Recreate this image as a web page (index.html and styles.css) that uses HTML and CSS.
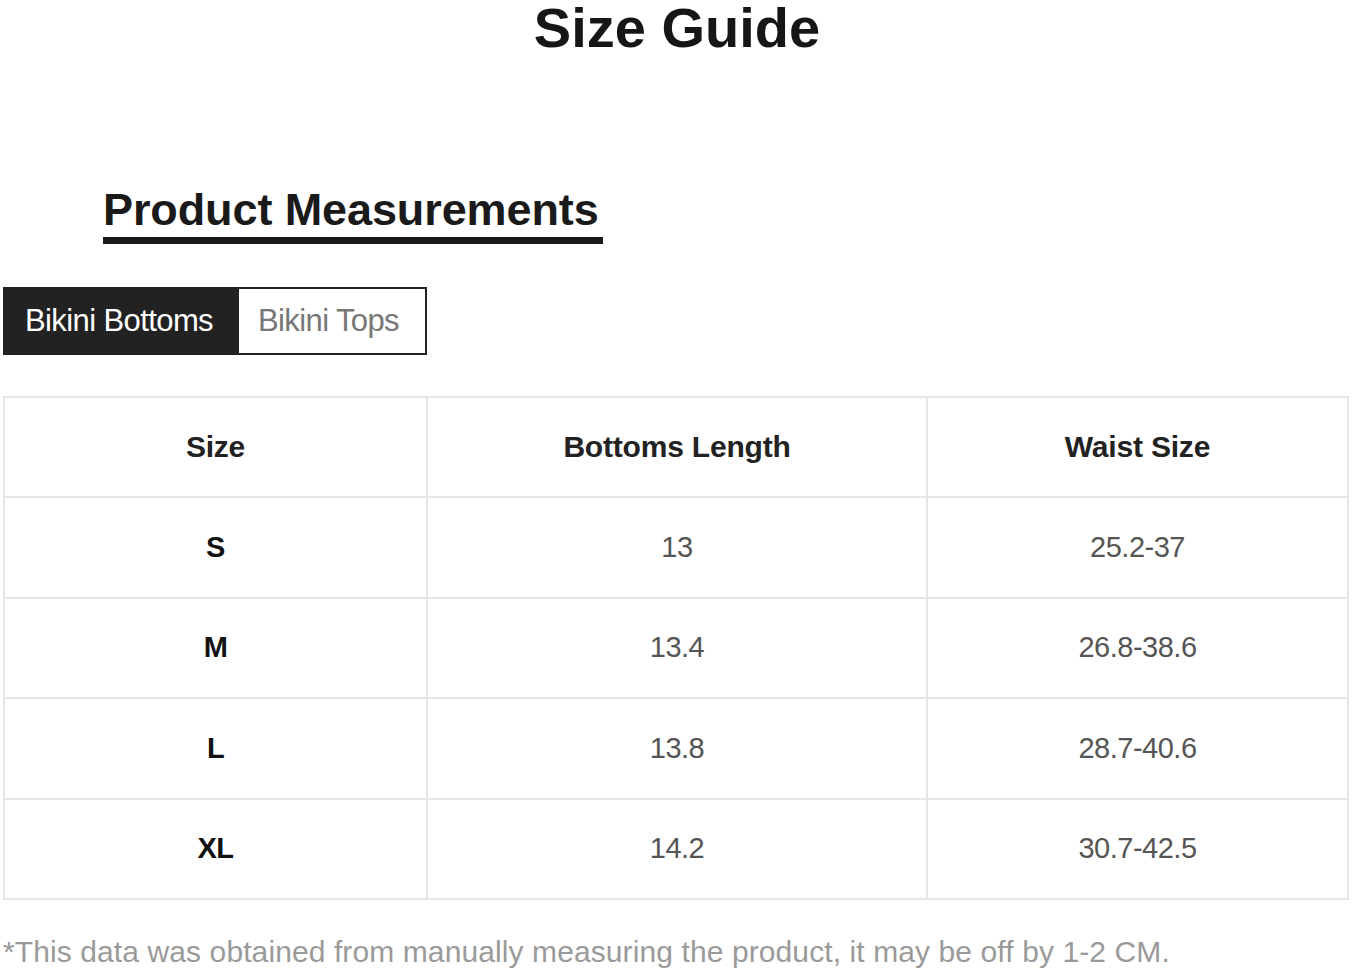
FILE: index.html
```html
<!DOCTYPE html>
<html lang="en">
<head>
<meta charset="utf-8">
<title>Size Guide</title>
<link rel="stylesheet" href="styles.css">
</head>
<body>
  <h1 class="page-title">Size Guide</h1>
  <main class="guide">
    <h2 class="section-title">Product Measurements</h2>
    <div class="tabs">
      <button class="tab tab-active">Bikini Bottoms</button>
      <button class="tab">Bikini Tops</button>
    </div>
    <table class="size-table">
      <colgroup>
        <col class="col-size">
        <col class="col-length">
        <col class="col-waist">
      </colgroup>
      <thead>
        <tr>
          <th>Size</th>
          <th>Bottoms Length</th>
          <th>Waist Size</th>
        </tr>
      </thead>
      <tbody>
        <tr><td class="size">S</td><td>13</td><td>25.2-37</td></tr>
        <tr><td class="size">M</td><td>13.4</td><td>26.8-38.6</td></tr>
        <tr><td class="size">L</td><td>13.8</td><td>28.7-40.6</td></tr>
        <tr><td class="size">XL</td><td>14.2</td><td>30.7-42.5</td></tr>
      </tbody>
    </table>
    <p class="note">*This data was obtained from manually measuring the product, it may be off by 1-2 CM.</p>
  </main>
</body>
</html>
```

FILE: styles.css
```css
html, body {
  margin: 0;
  padding: 0;
  background: #ffffff;
}

body {
  font-family: "Liberation Sans", Arial, sans-serif;
  color: #1a1a1a;
}

.page-title {
  margin: 0;
  font-size: 56px;
  line-height: 56px;
  font-weight: 700;
  text-align: center;
  color: #161616;
}

.guide {
  margin-left: 3px;
  width: 1344px;
  display: flex;
  flex-direction: column;
  align-items: flex-start;
}

.section-title {
  margin: 131px 0 0 100px;
  font-size: 45px;
  line-height: 46px;
  font-weight: 700;
  color: #1a1a1a;
  padding: 0 4px 4px 0;
  border-bottom: 7px solid #1a1a1a;
  letter-spacing: -0.1px;
}

.tabs {
  margin-top: 43px;
  display: flex;
}

.tab {
  height: 68px;
  padding: 0 26px 0 19px;
  border: 2px solid #222222;
  background: #ffffff;
  color: #777777;
  font-family: "Liberation Sans", Arial, sans-serif;
  font-size: 31px;
  letter-spacing: -0.6px;
  display: flex;
  align-items: center;
  cursor: pointer;
}

.tab-active {
  background: #222222;
  color: #ffffff;
  padding: 0 24px 0 20px;
}

.tab + .tab {
  border-left: none;
}

.size-table {
  margin-top: 41px;
  width: 1344px;
  border-collapse: collapse;
  table-layout: fixed;
  border: 2px solid #e6e6e6;
}

.col-size { width: 423px; }
.col-length { width: 500px; }
.col-waist { width: 421px; }

.size-table th,
.size-table td {
  height: 98.4px;
  padding: 0;
  border: 2px solid #e6e6e6;
  text-align: center;
  vertical-align: middle;
}

.size-table th {
  font-size: 30px;
  font-weight: 700;
  color: #222222;
  letter-spacing: -0.2px;
}

.size-table td {
  font-size: 29px;
  color: #555555;
  letter-spacing: -0.5px;
}

.size-table td.size {
  font-weight: 700;
  color: #111111;
}

.note {
  margin: 35px 0 0 0;
  font-size: 30px;
  line-height: 34px;
  color: #9a9a9a;
  letter-spacing: 0.1px;
}
```
